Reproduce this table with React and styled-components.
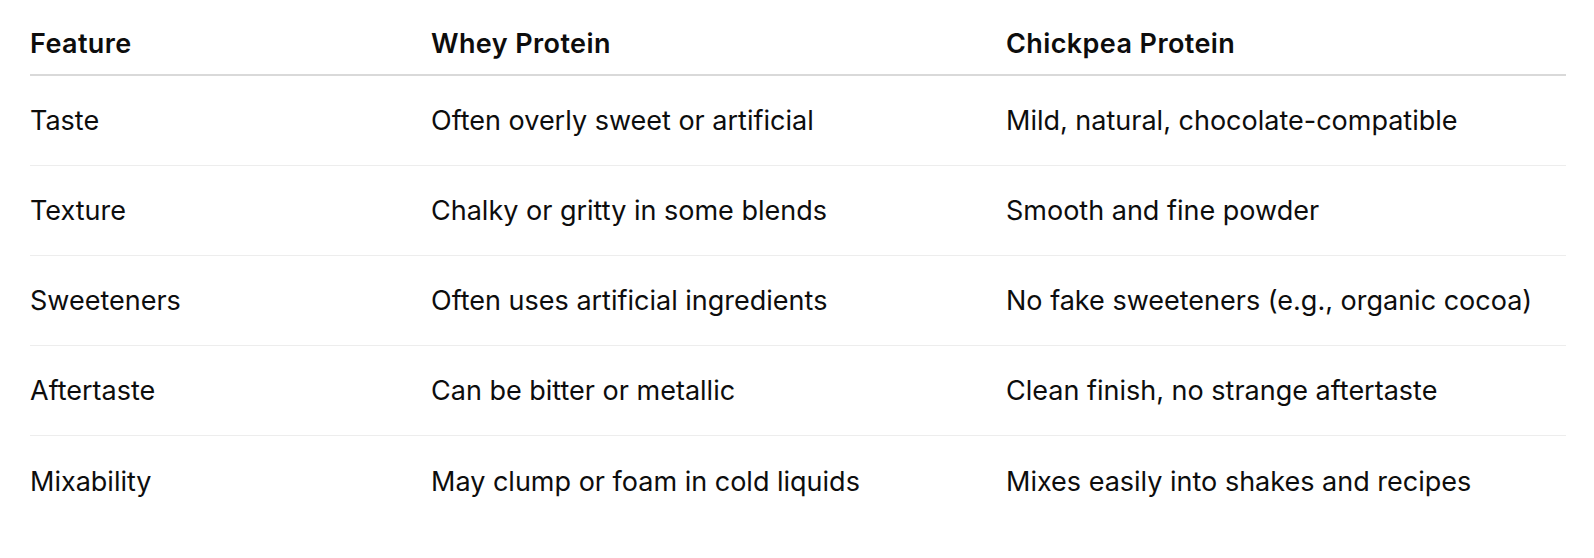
import React from 'react';
import styled, { createGlobalStyle } from 'styled-components';

const GlobalStyle = createGlobalStyle`
  html, body {
    margin: 0;
    padding: 0;
    background: #ffffff;
  }
  body {
    font-family: Inter, "Noto Sans", "Liberation Sans", sans-serif;
    color: #0d0d0d;
    -webkit-font-smoothing: antialiased;
  }
`;

const Page = styled.div`
  width: 1594px;
  height: 558px;
  padding: 0 28px 0 30px;
  box-sizing: border-box;
`;

const Table = styled.div`
  display: grid;
  grid-template-columns: 401px 575px 1fr;
`;

const Cell = styled.div`
  display: flex;
  align-items: center;
  font-size: 27px;
  line-height: 1;
  white-space: nowrap;
  height: ${p => (p.$head ? '76px' : '90px')};
  padding-top: ${p => (p.$head ? '12px' : '0')};
  box-sizing: border-box;
  font-weight: ${p => (p.$head ? 600 : 400)};
  letter-spacing: ${p => (p.$head ? '0.4px' : '0')};
  border-bottom: ${p =>
    p.$head ? '2px solid #d9d9d9' : p.$last ? 'none' : '1px solid #ededed'};
`;

const columns = ['Feature', 'Whey Protein', 'Chickpea Protein'];

const rows = [
  ['Taste', 'Often overly sweet or artificial', 'Mild, natural, chocolate-compatible'],
  ['Texture', 'Chalky or gritty in some blends', 'Smooth and fine powder'],
  ['Sweeteners', 'Often uses artificial ingredients', 'No fake sweeteners (e.g., organic cocoa)'],
  ['Aftertaste', 'Can be bitter or metallic', 'Clean finish, no strange aftertaste'],
  ['Mixability', 'May clump or foam in cold liquids', 'Mixes easily into shakes and recipes'],
];

export default function App() {
  return (
    <>
      <GlobalStyle />
      <Page>
        <Table>
          {columns.map(c => (
            <Cell key={c} $head>
              {c}
            </Cell>
          ))}
          {rows.map((r, i) =>
            r.map((v, j) => (
              <Cell key={`${i}-${j}`} $last={i === rows.length - 1}>
                {v}
              </Cell>
            ))
          )}
        </Table>
      </Page>
    </>
  );
}
